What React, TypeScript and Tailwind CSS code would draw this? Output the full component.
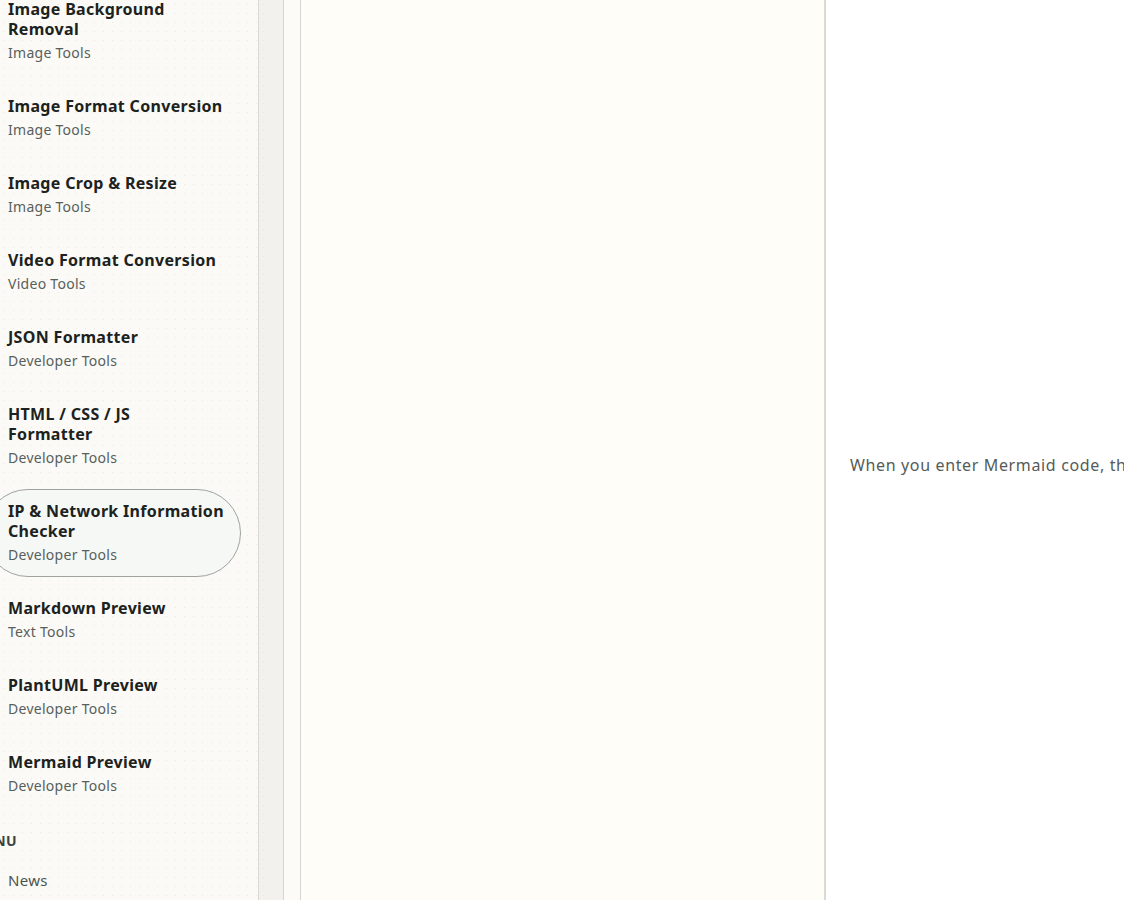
import React from 'react';

const tools = [
  { title: 'Image Background Removal', category: 'Image Tools' },
  { title: 'Image Format Conversion', category: 'Image Tools' },
  { title: 'Image Crop & Resize', category: 'Image Tools' },
  { title: 'Video Format Conversion', category: 'Video Tools' },
  { title: 'JSON Formatter', category: 'Developer Tools' },
  { title: 'HTML / CSS / JS\nFormatter', category: 'Developer Tools' },
  { title: 'IP & Network Information Checker', category: 'Developer Tools', active: true },
  { title: 'Markdown Preview', category: 'Text Tools' },
  { title: 'PlantUML Preview', category: 'Developer Tools' },
  { title: 'Mermaid Preview', category: 'Developer Tools' },
];

const dots =
  'bg-[radial-gradient(circle,#ebe9e2_0.8px,transparent_1px)] bg-[length:9px_9px]';

function Sidebar() {
  return (
    <aside className={`w-[259px] shrink-0 overflow-hidden border-r border-[#d9d8d1] bg-[#fbfaf6] ${dots}`}>
      <nav className="ml-[-16px] mt-[-13px] pr-[17px] flex flex-col gap-[9px]">
        {tools.map((t) => (
          <a
            key={t.title}
            href="#"
            className={`block rounded-full border pl-[23px] pr-4 py-[11px] ${
              t.active ? 'border-[#9fa3a0] bg-[#f6f8f6]' : 'border-transparent'
            }`}
          >
            <p className="whitespace-pre-line text-[16px] leading-[20px] font-bold tracking-[0.02em] text-[#1b2220] w-[222px]">
              {t.title}
            </p>
            <p className="mt-[4px] text-[14px] leading-[20px] tracking-[0.02em] text-[#58605c]">{t.category}</p>
          </a>
        ))}
        <p className="mt-[14px] ml-[-12px] text-[14px] leading-[20px] font-bold tracking-[0.04em] text-[#3d4340]">
          MENU
        </p>
        <a href="#" className="pl-[24px] mt-[10px] text-[15px] leading-[20px] tracking-[0.02em] text-[#4b5350]">
          News
        </a>
      </nav>
    </aside>
  );
}

export default function App() {
  return (
    <div className="h-[900px] w-[1124px] flex overflow-hidden bg-white font-['Noto_Sans',sans-serif]">
      <Sidebar />
      <div className={`w-[25px] shrink-0 border-r border-[#d6d5cf] bg-[#f2f1ed] ${dots}`} />
      <div className="w-[17px] shrink-0 border-r border-[#d6d5cf] bg-[#fcfbf7]" />
      <div className="w-[525px] shrink-0 border-r-2 border-[#dcdbd2] bg-[#fffdf8]">
        <textarea className="h-full w-full resize-none bg-transparent outline-none" />
      </div>
      <div className="flex-1 min-w-0 overflow-hidden bg-white flex items-center pt-[30px] pl-[24px]">
        <p className="whitespace-nowrap text-[16px] leading-[20px] tracking-[0.04em] text-[#555c58]">
          When you enter Mermaid code, the diagram preview will appear here.
        </p>
      </div>
    </div>
  );
}
